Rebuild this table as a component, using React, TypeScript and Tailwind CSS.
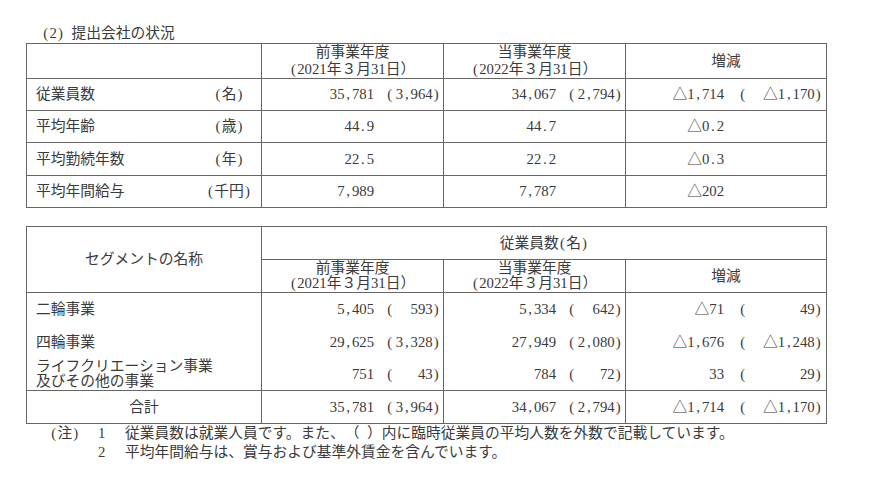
import React from "react";

// half-width glyph boxes for ASCII, like the Mincho typesetting in the filing
function T({ s }: { s: string }) {
  return (
    <>
      {Array.from(s).map((c, i) =>
        c.charCodeAt(0) < 128 ? (
          <span key={i} className="inline-block w-[0.5em] text-center">
            {c}
          </span>
        ) : (
          <React.Fragment key={i}>{c}</React.Fragment>
        )
      )}
    </>
  );
}

type V = [string, string?];

function Val({ v, wide }: { v: V; wide?: boolean }) {
  const [main, paren] = v;
  return (
    <div className="flex items-center justify-end whitespace-nowrap">
      <span>
        <T s={main} />
      </span>
      <span className={`flex ${wide ? "w-[98px]" : "w-[66px]"}`}>
        <span className={wide ? "pl-[15px]" : "pl-[12px]"}>
          {paren ? <T s="(" /> : null}
        </span>
        <span className="flex-1 text-right">{paren ? <T s={paren} /> : null}</span>
      </span>
    </div>
  );
}

const staff: { label: string; unit: string; vals: V[] }[] = [
  { label: "従業員数", unit: "(名)", vals: [["35,781", "3,964)"], ["34,067", "2,794)"], ["△1,714", "△1,170)"]] },
  { label: "平均年齢", unit: "(歳)", vals: [["44.9"], ["44.7"], ["△0.2"]] },
  { label: "平均勤続年数", unit: "(年)", vals: [["22.5"], ["22.2"], ["△0.3"]] },
  { label: "平均年間給与", unit: "(千円)", vals: [["7,989"], ["7,787"], ["△202"]] },
];

const segments: { label: string[]; vals: V[] }[] = [
  { label: ["二輪事業"], vals: [["5,405", "593)"], ["5,334", "642)"], ["△71", "49)"]] },
  { label: ["四輪事業"], vals: [["29,625", "3,328)"], ["27,949", "2,080)"], ["△1,676", "△1,248)"]] },
  { label: ["ライフクリエーション事業", "及びその他の事業"], vals: [["751", "43)"], ["784", "72)"], ["33", "29)"]] },
];

const total: V[] = [["35,781", "3,964)"], ["34,067", "2,794)"], ["△1,714", "△1,170)"]];

function Cols() {
  return (
    <colgroup>
      <col className="w-[235px]" />
      <col className="w-[182px]" />
      <col className="w-[182px]" />
      <col className="w-[201px]" />
    </colgroup>
  );
}

export default function App() {
  return (
    <div className="h-[478px] w-[870px] bg-white pt-[23px] font-['Liberation_Serif','Noto_Sans_CJK_JP',serif] text-[14.75px] text-[#3a3a3a] [text-spacing-trim:space-all]">
      {/* Title */}
      <div className="h-[20px] pl-[42px] leading-[20px]">
        <T s="(2) " />
        提出会社の状況
      </div>

      {/* Table 1 */}
      <table className="ml-[26px] w-[800px] table-fixed border-collapse border border-[#666]">
        <Cols />
        <thead>
          <tr className="h-[34px]">
            <th className="border border-[#666]" />
            <th className="border border-[#666] text-center font-normal leading-[17px]">
              前事業年度
              <br />
              <T s="(2021" />年３月<T s="31" />日）
            </th>
            <th className="border border-[#666] text-center font-normal leading-[17px]">
              当事業年度
              <br />
              <T s="(2022" />年３月<T s="31" />日）
            </th>
            <th className="border border-[#666] text-center font-normal">増減</th>
          </tr>
        </thead>
        <tbody>
          {staff.map((r, i) => (
            <tr key={r.label} className={i === 2 ? "h-[33px]" : "h-[32px]"}>
              <td className="border border-[#666] pl-[9px] pr-[7px]">
                <div className="flex items-center justify-between">
                  <span>{r.label}</span>
                  <span className="w-[50px] text-center">
                    <T s={r.unit.slice(0, 1)} />
                    {r.unit.slice(1, -1)}
                    <T s=")" />
                  </span>
                </div>
              </td>
              <td className="border border-[#666] pr-[3px]">
                <Val v={r.vals[0]} />
              </td>
              <td className="border border-[#666] pr-[3px]">
                <Val v={r.vals[1]} />
              </td>
              <td className="border border-[#666] pr-[4px]">
                <Val v={r.vals[2]} wide />
              </td>
            </tr>
          ))}
        </tbody>
      </table>

      {/* Table 2 */}
      <table className="ml-[26px] mt-[18px] w-[800px] table-fixed border-collapse border border-[#666]">
        <Cols />
        <thead>
          <tr className="h-[33px]">
            <th rowSpan={2} className="border border-[#666] text-center font-normal">
              セグメントの名称
            </th>
            <th colSpan={3} className="border border-[#666] text-center font-normal">
              従業員数<T s="(" />名<T s=")" />
            </th>
          </tr>
          <tr className="h-[33px]">
            <th className="border border-[#666] text-center font-normal leading-[15px]">
              前事業年度
              <br />
              <T s="(2021" />年３月<T s="31" />日）
            </th>
            <th className="border border-[#666] text-center font-normal leading-[15px]">
              当事業年度
              <br />
              <T s="(2022" />年３月<T s="31" />日）
            </th>
            <th className="border border-[#666] text-center font-normal">増減</th>
          </tr>
        </thead>
        <tbody>
          {segments.map((r, i) => (
            <tr key={i} className={i === 2 ? "h-[32px]" : "h-[33px]"}>
              <td className="border-x border-[#666] pl-[9px] leading-[15px]">
                {r.label.map((l) => (
                  <div key={l}>{l}</div>
                ))}
              </td>
              <td className="border-x border-[#666] pr-[3px]">
                <Val v={r.vals[0]} />
              </td>
              <td className="border-x border-[#666] pr-[3px]">
                <Val v={r.vals[1]} />
              </td>
              <td className="border-x border-[#666] pr-[4px]">
                <Val v={r.vals[2]} wide />
              </td>
            </tr>
          ))}
          <tr className="h-[33px]">
            <td className="border border-[#666] text-center">合計</td>
            <td className="border border-[#666] pr-[3px]">
              <Val v={total[0]} />
            </td>
            <td className="border border-[#666] pr-[3px]">
              <Val v={total[1]} />
            </td>
            <td className="border border-[#666] pr-[4px]">
              <Val v={total[2]} wide />
            </td>
          </tr>
        </tbody>
      </table>

      {/* Notes */}
      <div className="leading-[19px]">
        <div className="flex">
          <span className="w-[98px] pl-[50px]">
            <T s="(" />注<T s=")" />
          </span>
          <span className="w-[27px]">
            <T s="1" />
          </span>
          <span>
            従業員数は就業人員です。また、（<T s=" " />）内に臨時従業員の平均人数を外数で記載しています。
          </span>
        </div>
        <div className="flex">
          <span className="w-[98px]" />
          <span className="w-[27px]">
            <T s="2" />
          </span>
          <span>平均年間給与は、賞与および基準外賃金を含んでいます。</span>
        </div>
      </div>
    </div>
  );
}
